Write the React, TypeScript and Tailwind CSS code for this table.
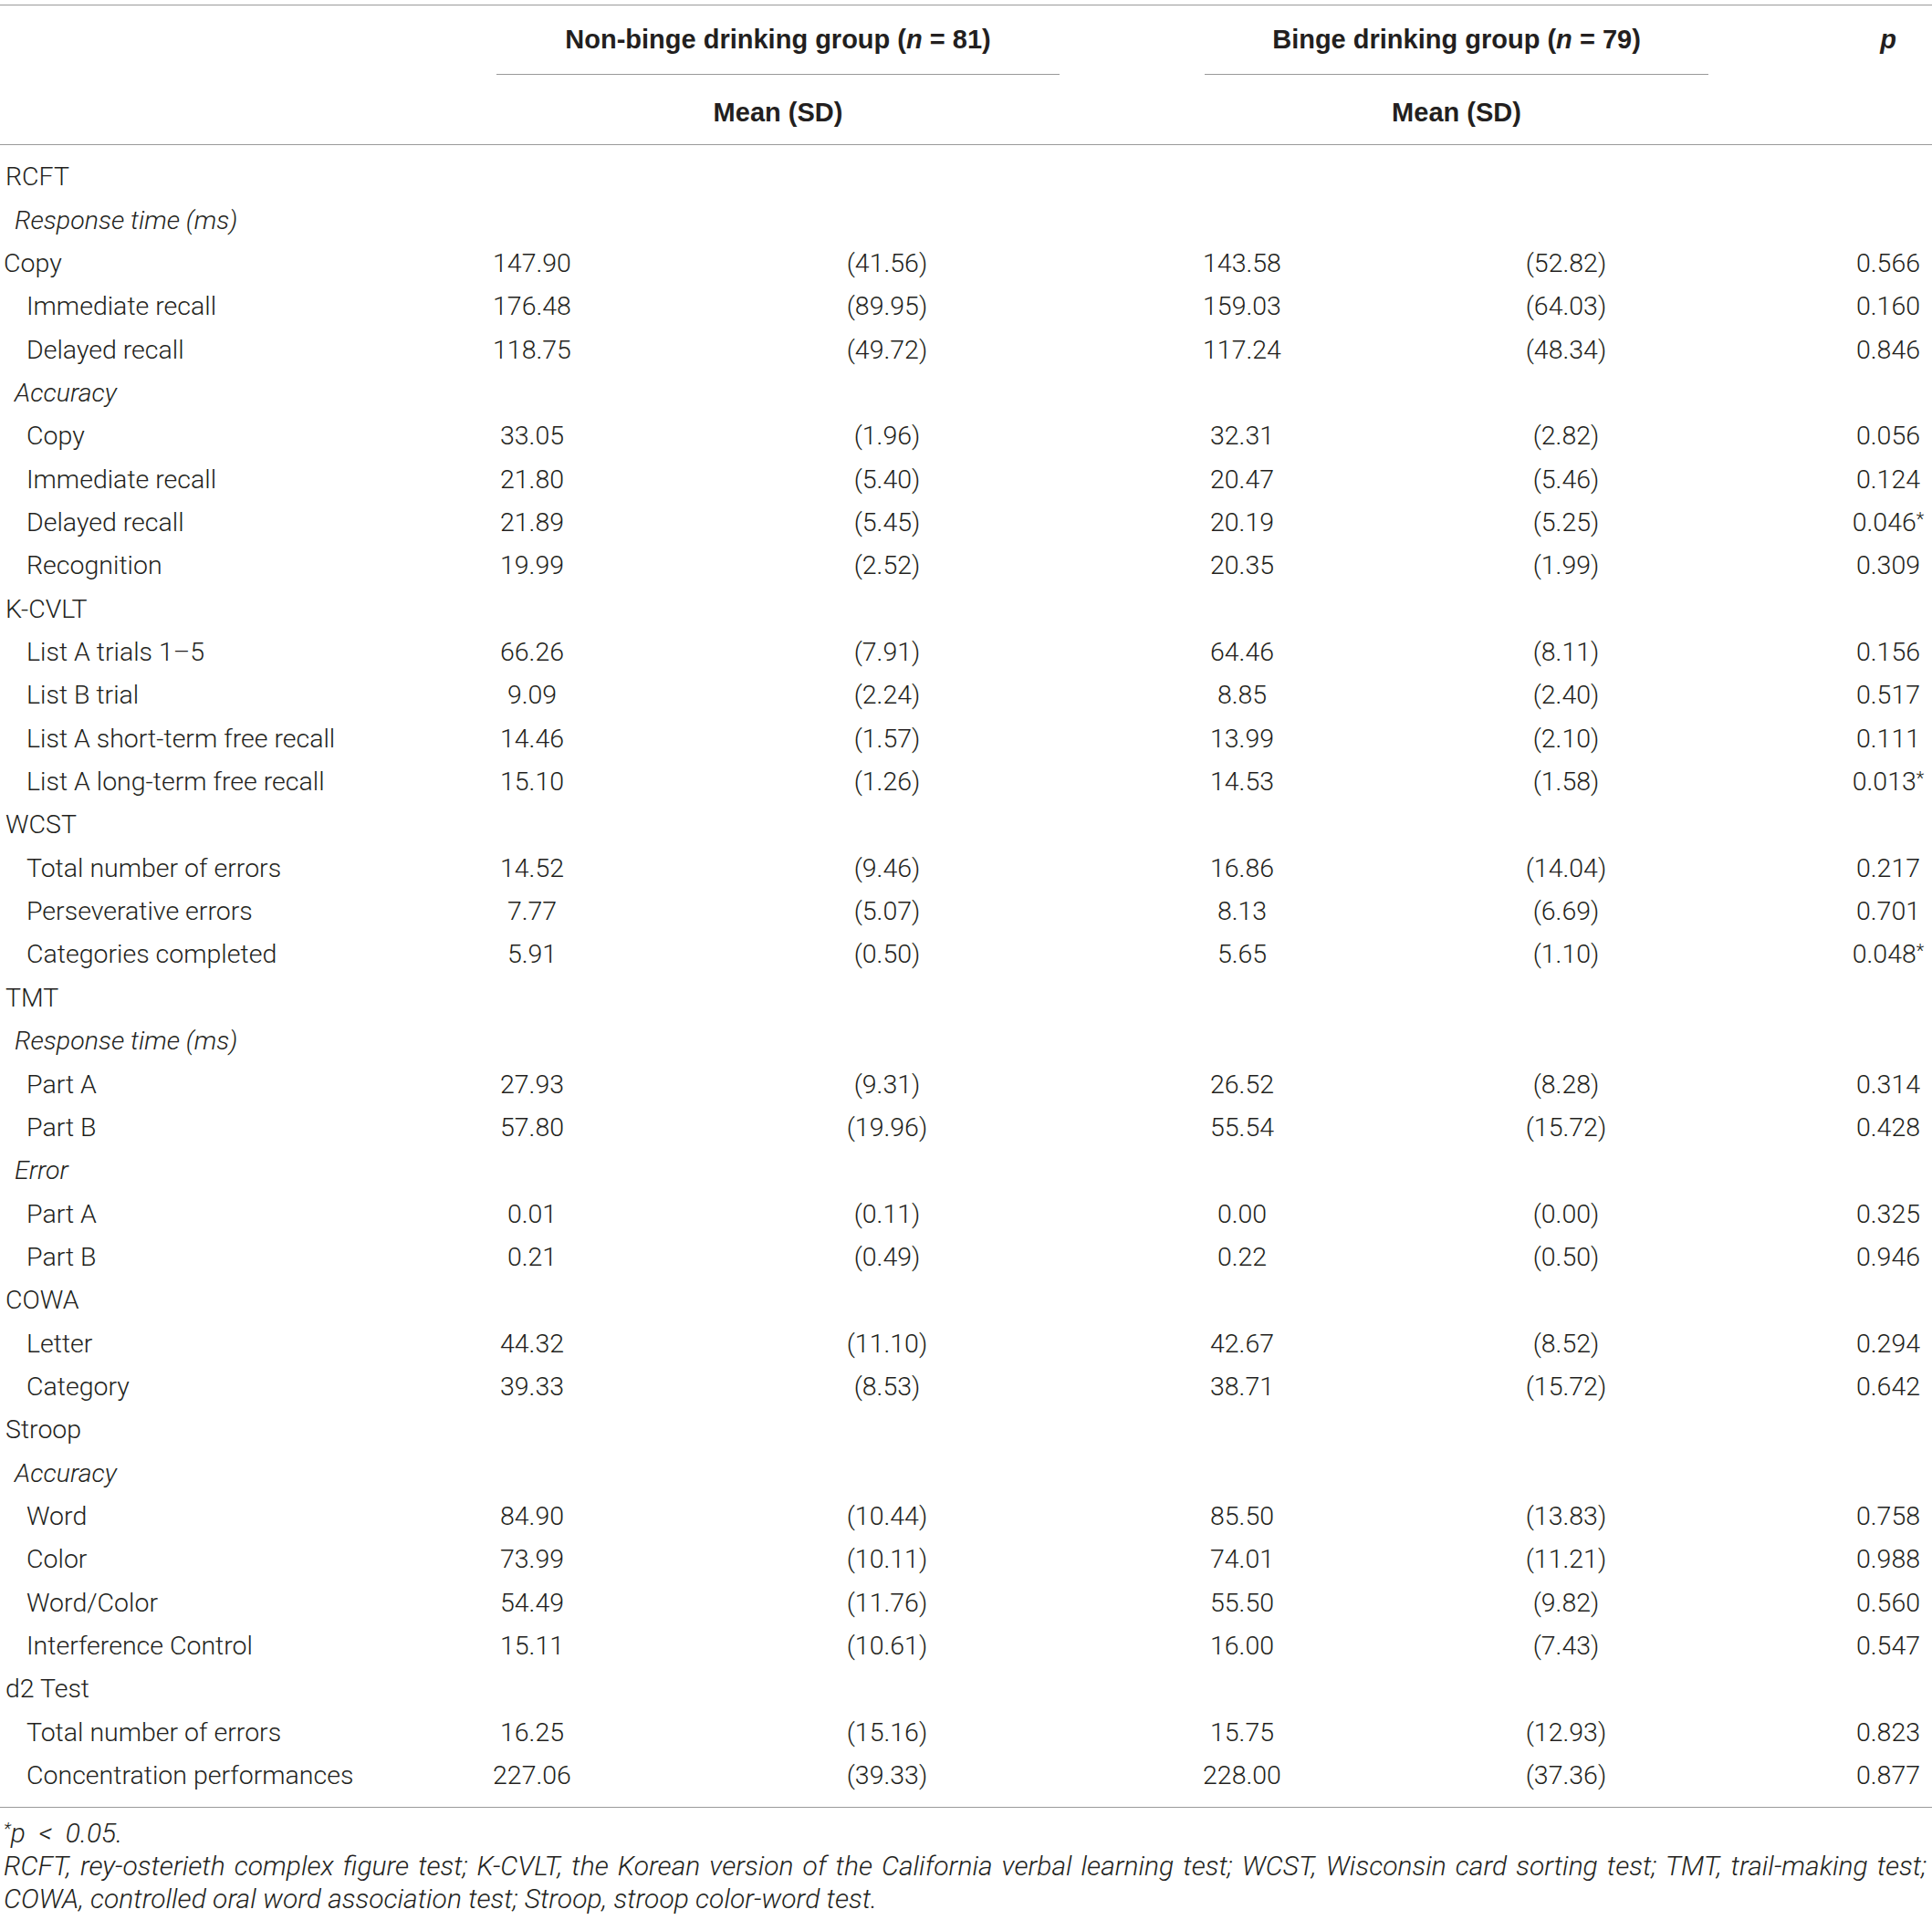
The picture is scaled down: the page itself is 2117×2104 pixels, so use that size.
import React from "react";

type Row =
  | { kind: "group"; label: string }
  | { kind: "sub"; label: string }
  | { kind: "item"; label: string; flat?: boolean; v: [string, string, string, string, string] };

const rows: Row[] = [
  { kind: "group", label: "RCFT" },
  { kind: "sub", label: "Response time (ms)" },
  { kind: "item", label: "Copy", flat: true, v: ["147.90", "(41.56)", "143.58", "(52.82)", "0.566"] },
  { kind: "item", label: "Immediate recall", v: ["176.48", "(89.95)", "159.03", "(64.03)", "0.160"] },
  { kind: "item", label: "Delayed recall", v: ["118.75", "(49.72)", "117.24", "(48.34)", "0.846"] },
  { kind: "sub", label: "Accuracy" },
  { kind: "item", label: "Copy", v: ["33.05", "(1.96)", "32.31", "(2.82)", "0.056"] },
  { kind: "item", label: "Immediate recall", v: ["21.80", "(5.40)", "20.47", "(5.46)", "0.124"] },
  { kind: "item", label: "Delayed recall", v: ["21.89", "(5.45)", "20.19", "(5.25)", "0.046*"] },
  { kind: "item", label: "Recognition", v: ["19.99", "(2.52)", "20.35", "(1.99)", "0.309"] },
  { kind: "group", label: "K-CVLT" },
  { kind: "item", label: "List A trials 1–5", v: ["66.26", "(7.91)", "64.46", "(8.11)", "0.156"] },
  { kind: "item", label: "List B trial", v: ["9.09", "(2.24)", "8.85", "(2.40)", "0.517"] },
  { kind: "item", label: "List A short-term free recall", v: ["14.46", "(1.57)", "13.99", "(2.10)", "0.111"] },
  { kind: "item", label: "List A long-term free recall", v: ["15.10", "(1.26)", "14.53", "(1.58)", "0.013*"] },
  { kind: "group", label: "WCST" },
  { kind: "item", label: "Total number of errors", v: ["14.52", "(9.46)", "16.86", "(14.04)", "0.217"] },
  { kind: "item", label: "Perseverative errors", v: ["7.77", "(5.07)", "8.13", "(6.69)", "0.701"] },
  { kind: "item", label: "Categories completed", v: ["5.91", "(0.50)", "5.65", "(1.10)", "0.048*"] },
  { kind: "group", label: "TMT" },
  { kind: "sub", label: "Response time (ms)" },
  { kind: "item", label: "Part A", v: ["27.93", "(9.31)", "26.52", "(8.28)", "0.314"] },
  { kind: "item", label: "Part B", v: ["57.80", "(19.96)", "55.54", "(15.72)", "0.428"] },
  { kind: "sub", label: "Error" },
  { kind: "item", label: "Part A", v: ["0.01", "(0.11)", "0.00", "(0.00)", "0.325"] },
  { kind: "item", label: "Part B", v: ["0.21", "(0.49)", "0.22", "(0.50)", "0.946"] },
  { kind: "group", label: "COWA" },
  { kind: "item", label: "Letter", v: ["44.32", "(11.10)", "42.67", "(8.52)", "0.294"] },
  { kind: "item", label: "Category", v: ["39.33", "(8.53)", "38.71", "(15.72)", "0.642"] },
  { kind: "group", label: "Stroop" },
  { kind: "sub", label: "Accuracy" },
  { kind: "item", label: "Word", v: ["84.90", "(10.44)", "85.50", "(13.83)", "0.758"] },
  { kind: "item", label: "Color", v: ["73.99", "(10.11)", "74.01", "(11.21)", "0.988"] },
  { kind: "item", label: "Word/Color", v: ["54.49", "(11.76)", "55.50", "(9.82)", "0.560"] },
  { kind: "item", label: "Interference Control", v: ["15.11", "(10.61)", "16.00", "(7.43)", "0.547"] },
  { kind: "group", label: "d2 Test" },
  { kind: "item", label: "Total number of errors", v: ["16.25", "(15.16)", "15.75", "(12.93)", "0.823"] },
  { kind: "item", label: "Concentration performances", v: ["227.06", "(39.33)", "228.00", "(37.36)", "0.877"] },
];

const cols = "grid grid-cols-[440px_286px_492px_286px_424px_189px]";

function PValue({ text }: { text: string }) {
  if (text.endsWith("*")) {
    return (
      <span>
        {text.slice(0, -1)}
        <span className="relative -top-[6px] text-[20px]">*</span>
      </span>
    );
  }
  return <span>{text}</span>;
}

function BodyRow({ row }: { row: Row }) {
  if (row.kind === "group") {
    return (
      <div className={`${cols} h-[47.35px] items-center`}>
        <div className="pl-[6px]">{row.label}</div>
      </div>
    );
  }
  if (row.kind === "sub") {
    return (
      <div className={`${cols} h-[47.35px] items-center`}>
        <div className="col-span-2 pl-[16px] italic">{row.label}</div>
      </div>
    );
  }
  return (
    <div className={`${cols} h-[47.35px] items-center`}>
      <div className={row.flat ? "pl-[4px]" : "pl-[29px]"}>{row.label}</div>
      <div className="text-center">{row.v[0]}</div>
      <div className="text-center">{row.v[1]}</div>
      <div className="text-center">{row.v[2]}</div>
      <div className="text-center">{row.v[3]}</div>
      <div className="pl-[93px] text-center">
        <PValue text={row.v[4]} />
      </div>
    </div>
  );
}

export default function App() {
  return (
    <div
      className="w-[2117px] bg-white pt-[5px] text-[28.5px] font-light text-[#231f20]"
      style={{ fontFamily: "Roboto, 'Liberation Sans', sans-serif" }}
    >
      <div className="border-t border-[#9a9a9a]">
        {/* header */}
        <div
          className={`${cols} border-b border-[#9a9a9a] text-[29px] font-bold`}
          style={{ fontFamily: "'Liberation Sans', Arial, sans-serif" }}
        >
          <div className="h-[76px]" />
          <div className="col-span-2 ml-[104px] mr-[57px] flex h-[76px] items-center justify-center border-b border-[#9a9a9a]">
            <span>
              Non-binge drinking group (<i>n</i> = 81)
            </span>
          </div>
          <div className="col-span-2 ml-[102px] mr-[56px] flex h-[76px] items-center justify-center border-b border-[#9a9a9a]">
            <span>
              Binge drinking group (<i>n</i> = 79)
            </span>
          </div>
          <div className="flex h-[76px] items-center justify-center pl-[93px] italic">p</div>

          <div className="h-[76px]" />
          <div className="col-span-2 ml-[104px] mr-[57px] flex h-[76px] items-center justify-center pt-[8px]">
            Mean (SD)
          </div>
          <div className="col-span-2 ml-[102px] mr-[56px] flex h-[76px] items-center justify-center pt-[8px]">
            Mean (SD)
          </div>
          <div />
        </div>

        {/* body */}
        <div className="border-b border-[#9a9a9a] pt-[12px] pb-[10px]">
          {rows.map((r, i) => (
            <BodyRow key={i} row={r} />
          ))}
        </div>

        {/* footnotes */}
        <div className="pt-[10px] pl-[4px] pr-[6px] text-[30px] leading-[36px] italic">
          <div>
            <sup className="text-[19px]">*</sup>p&nbsp; &lt;&nbsp; 0.05.
          </div>
          <div className="text-justify [text-align-last:justify]">
            RCFT, rey-osterieth complex figure test; K-CVLT, the Korean version of the California verbal learning test; WCST, Wisconsin card sorting test; TMT, trail-making test;
          </div>
          <div>COWA, controlled oral word association test; Stroop, stroop color-word test.</div>
        </div>
      </div>
    </div>
  );
}
